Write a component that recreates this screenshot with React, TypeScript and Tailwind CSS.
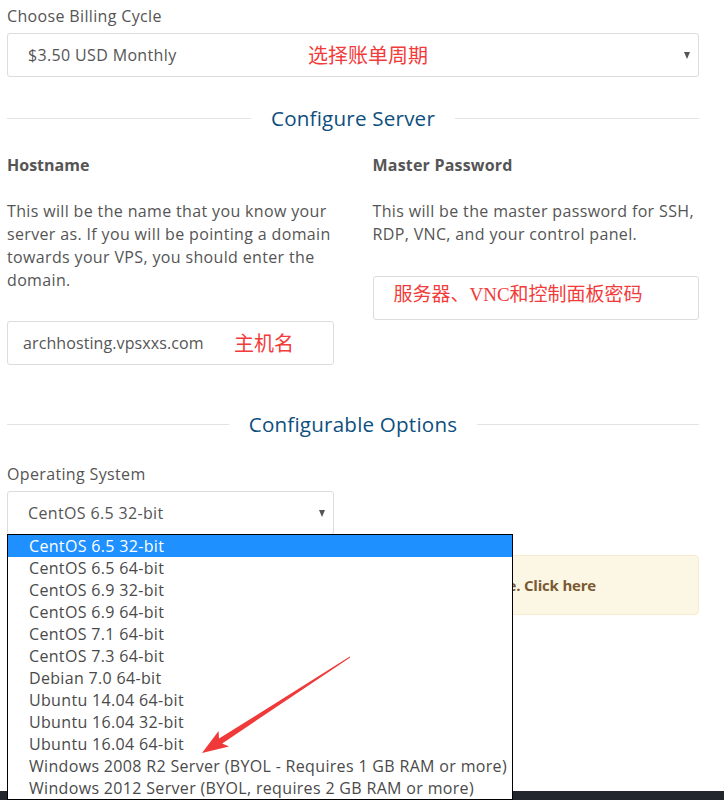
import React from "react";

const OS_OPTIONS = [
  "CentOS 6.5 32-bit",
  "CentOS 6.5 64-bit",
  "CentOS 6.9 32-bit",
  "CentOS 6.9 64-bit",
  "CentOS 7.1 64-bit",
  "CentOS 7.3 64-bit",
  "Debian 7.0 64-bit",
  "Ubuntu 14.04 64-bit",
  "Ubuntu 16.04 32-bit",
  "Ubuntu 16.04 64-bit",
  "Windows 2008 R2 Server (BYOL - Requires 1 GB RAM or more)",
  "Windows 2012 Server (BYOL, requires 2 GB RAM or more)",
];

const CJK = "font-['Noto_Sans_CJK_SC',sans-serif] tracking-normal";

function Caret() {
  return <span className="h-0 w-0 border-x-[3.5px] border-t-[7px] border-x-transparent border-t-[#555]" />;
}

function SectionTitle({ title }: { title: string }) {
  return (
    <div className="flex items-center">
      <div className="h-px flex-1 bg-[#e3e3e3]" />
      <h3 className="px-5 text-[20.6px] leading-6 tracking-[0.2px] text-[#0d4f7e]">{title}</h3>
      <div className="h-px flex-1 bg-[#e3e3e3]" />
    </div>
  );
}

function Arrow() {
  return (
    <svg className="pointer-events-none absolute left-0 top-0" width="724" height="800">
      <polygon
        fill="#f03a3a"
        points="349.8,656.5 219.0,738.6 218.6,731.0 202,753 229.0,746.6 222.2,743.4 350.2,657.5"
      />
    </svg>
  );
}

export default function App() {
  return (
    <div className="relative flex h-[800px] w-[724px] flex-col overflow-hidden bg-white font-['Open_Sans',sans-serif] text-[16px] tracking-[0.35px] text-[#555]">
      <div className="pl-[7px] pr-[25px]">
        <label className="mt-[5px] block leading-[22px]">Choose Billing Cycle</label>
        <div className="mt-[6px] flex h-[44px] items-center rounded-[3px] border border-[#dcdcdc] pl-5 pr-[8px]">
          <span className="w-[280px]">$3.50 USD Monthly</span>
          <span className={`${CJK} flex-1 text-[20px] text-[#f23b3b]`}>选择账单周期</span>
          <Caret />
        </div>

        <div className="mt-[29px]">
          <SectionTitle title="Configure Server" />
        </div>

        <div className="mt-[24px] grid grid-cols-2 gap-[39px]">
          <div>
            <div className="font-bold leading-[22px] tracking-normal">Hostname</div>
            <p className="mt-[24px] leading-[23px]">
              This will be the name that you know your server as. If you will be pointing a domain towards your VPS, you should enter the domain.
            </p>
            <div className="mt-[29px] flex h-[44px] items-center rounded-[3px] border border-[#dcdcdc] pl-[15px]">
              <span className="w-[211px] tracking-[0.1px]">archhosting.vpsxxs.com</span>
              <span className={`${CJK} text-[20px] text-[#f23b3b]`}>主机名</span>
            </div>
          </div>
          <div>
            <div className="font-bold leading-[22px] tracking-[0.2px]">Master Password</div>
            <p className="mt-[24px] leading-[23px]">
              This will be the master password for SSH, RDP, VNC, and your control panel.
            </p>
            <div className="mt-[30px] flex h-[44px] items-start rounded-[3px] border border-[#dcdcdc] pl-5 pt-[4px]">
              <span className="font-['Liberation_Serif','Noto_Sans_CJK_SC',serif] text-[19px] tracking-normal text-[#f23b3b]">
                服务器、VNC和控制面板密码
              </span>
            </div>
          </div>
        </div>

        <div className="mt-[47px]">
          <SectionTitle title="Configurable Options" />
        </div>

        <label className="mt-[27px] block leading-[22px]">Operating System</label>
        <div className="mt-[6px] flex h-[44px] w-[327px] items-center justify-between rounded-[3px] border border-[#dcdcdc] pl-5 pr-[8px]">
          <span>CentOS 6.5 32-bit</span>
          <Caret />
        </div>

        <div className="mt-[20px] flex h-[60px] items-center justify-end rounded-[4px] border border-[#f7ecd0] bg-[#fcf7e4] pr-[102px] text-[15px] font-bold tracking-[-0.2px] text-[#7a5a30]">
          Windows requires your own licence. Click here
        </div>
      </div>

      <div className="mt-auto h-[9px] bg-[#23262d]" />

      <ul className="absolute left-[7px] top-[534px] w-[506px] border border-black bg-white tracking-[0.33px] text-[#4a4a4a]">
        {OS_OPTIONS.map((os, i) => (
          <li
            key={os}
            className={`h-[22px] pl-[21px] leading-[22px] ${i === 0 ? "bg-[#1e90ff] text-white" : ""}`}
          >
            {os}
          </li>
        ))}
      </ul>

      <Arrow />
    </div>
  );
}
